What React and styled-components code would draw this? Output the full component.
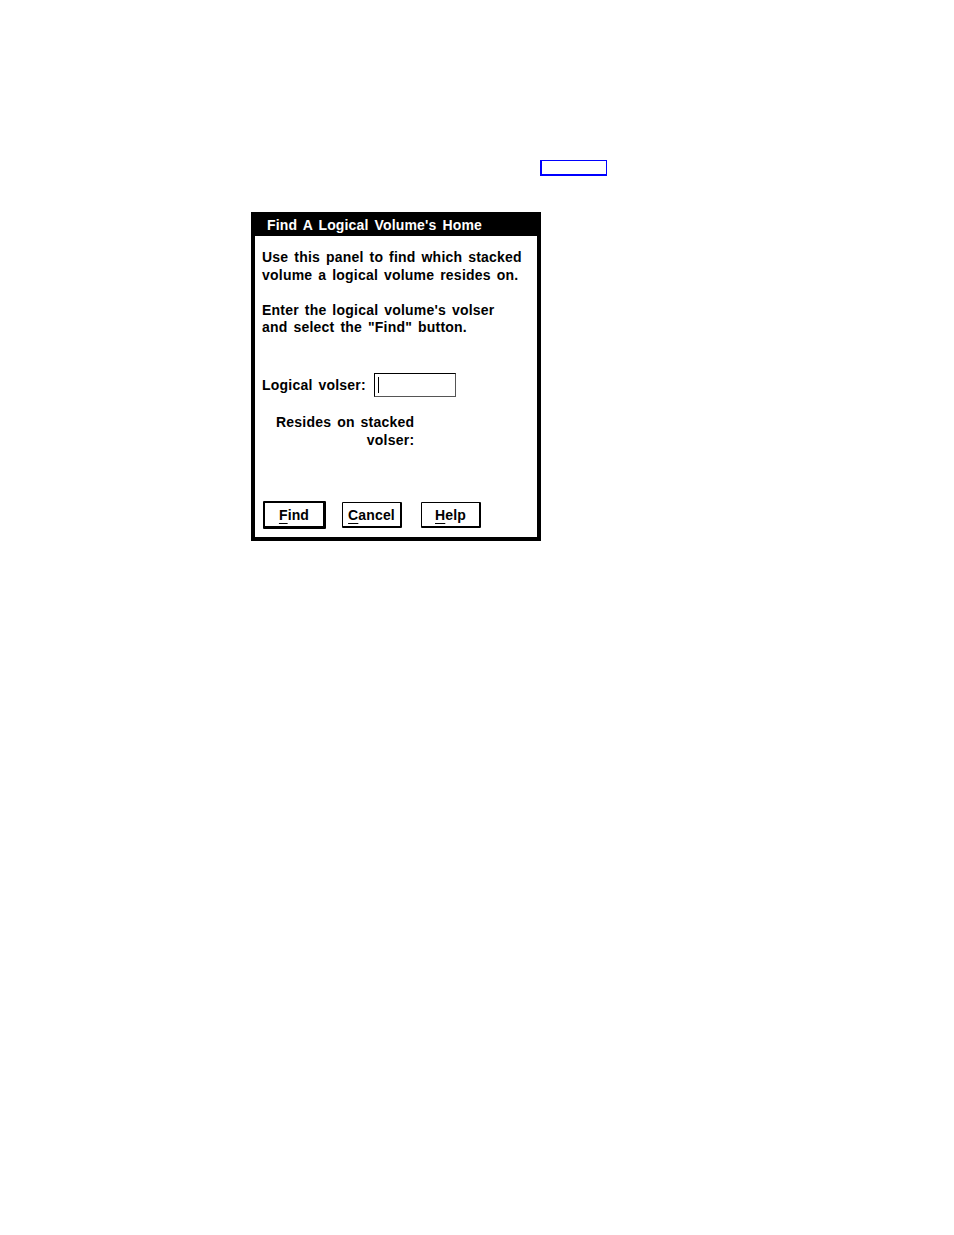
import React from 'react';
import styled, { createGlobalStyle } from 'styled-components';

const GlobalStyle = createGlobalStyle`
  html, body {
    margin: 0;
    padding: 0;
    background: #fff;
  }
  body {
    font-family: "Liberation Sans", Arial, sans-serif;
    color: #000;
  }
`;

const Page = styled.div`
  width: 954px;
  min-height: 1235px;
  padding-top: 160px;
  box-sizing: border-box;
`;

const LinkBox = styled.div`
  margin-left: 540px;
  width: 67px;
  height: 16px;
  box-sizing: border-box;
  border: 1px solid #0000ff;
  border-left-width: 2px;
  border-bottom-width: 2px;
`;

const Dialog = styled.div`
  margin: 36px 0 0 251px;
  width: 290px;
  height: 329px;
  box-sizing: border-box;
  border: 4px solid #000;
  border-top-width: 0;
  display: flex;
  flex-direction: column;
  background: #fff;
`;

const TitleBar = styled.div`
  height: 24px;
  background: #000;
  color: #fff;
  font-size: 14px;
  font-weight: bold;
  line-height: 27px;
  padding-left: 12px;
  letter-spacing: 0.15px;
  word-spacing: 2px;
  white-space: nowrap;
`;

const Body = styled.div`
  flex: 1;
  display: flex;
  flex-direction: column;
  padding: 13px 0 0 7px;
  font-size: 14px;
  font-weight: bold;
  letter-spacing: 0.22px;
  word-spacing: 1.8px;
  white-space: nowrap;
`;

const Para = styled.p`
  margin: 0 0 17.5px;
  line-height: 17.5px;
`;

const FieldRow = styled.div`
  display: flex;
  align-items: center;
  gap: 8px;
  margin-top: 19px;
  height: 24px;
`;

const Input = styled.div`
  width: 82px;
  height: 24px;
  box-sizing: border-box;
  border: 1px solid #000;
  border-right-color: #555;
  border-bottom-color: #555;
  padding: 3px 0 0 3px;
`;

const Caret = styled.div`
  width: 1px;
  height: 16px;
  background: #000;
`;

const Result = styled.div`
  margin: 16px 0 0 14px;
  align-self: flex-start;
  display: flex;
  flex-direction: column;
  align-items: flex-end;
  line-height: 18px;
`;

const Buttons = styled.div`
  margin-top: auto;
  margin-bottom: 8px;
  display: flex;
  align-items: center;
  padding-left: 1px;
`;

const Button = styled.button`
  width: ${p => (p.$default ? 63 : 60)}px;
  height: ${p => (p.$default ? 28 : 26)}px;
  margin-right: ${p => p.$gap}px;
  box-sizing: border-box;
  background: #fff;
  border: ${p => (p.$default ? '2px' : '1px')} solid #000;
  border-right-width: ${p => (p.$default ? 3 : 2)}px;
  border-bottom-width: ${p => (p.$default ? 3 : 2)}px;
  border-radius: 1px;
  font-family: "Liberation Sans", Arial, sans-serif;
  font-size: 14px;
  font-weight: bold;
  color: #000;
  padding: 0;
  letter-spacing: 0.15px;
  cursor: pointer;

  u {
    text-decoration-thickness: 1px;
    text-underline-offset: 3px;
  }
`;

const App = () => (
  <Page>
    <GlobalStyle />
    <LinkBox />
    <Dialog>
      <TitleBar>Find A Logical Volume's Home</TitleBar>
      <Body>
        <Para>
          Use this panel to find which stacked
          <br />
          volume a logical volume resides on.
        </Para>
        <Para>
          Enter the logical volume's volser
          <br />
          and select the "Find" button.
        </Para>
        <FieldRow>
          <span>Logical volser:</span>
          <Input>
            <Caret />
          </Input>
        </FieldRow>
        <Result>
          <span>Resides on stacked</span>
          <span>volser:</span>
        </Result>
        <Buttons>
          <Button $default $gap={16}>
            <u>F</u>ind
          </Button>
          <Button $gap={19}>
            <u>C</u>ancel
          </Button>
          <Button $gap={0}>
            <u>H</u>elp
          </Button>
        </Buttons>
      </Body>
    </Dialog>
  </Page>
);

export default App;
